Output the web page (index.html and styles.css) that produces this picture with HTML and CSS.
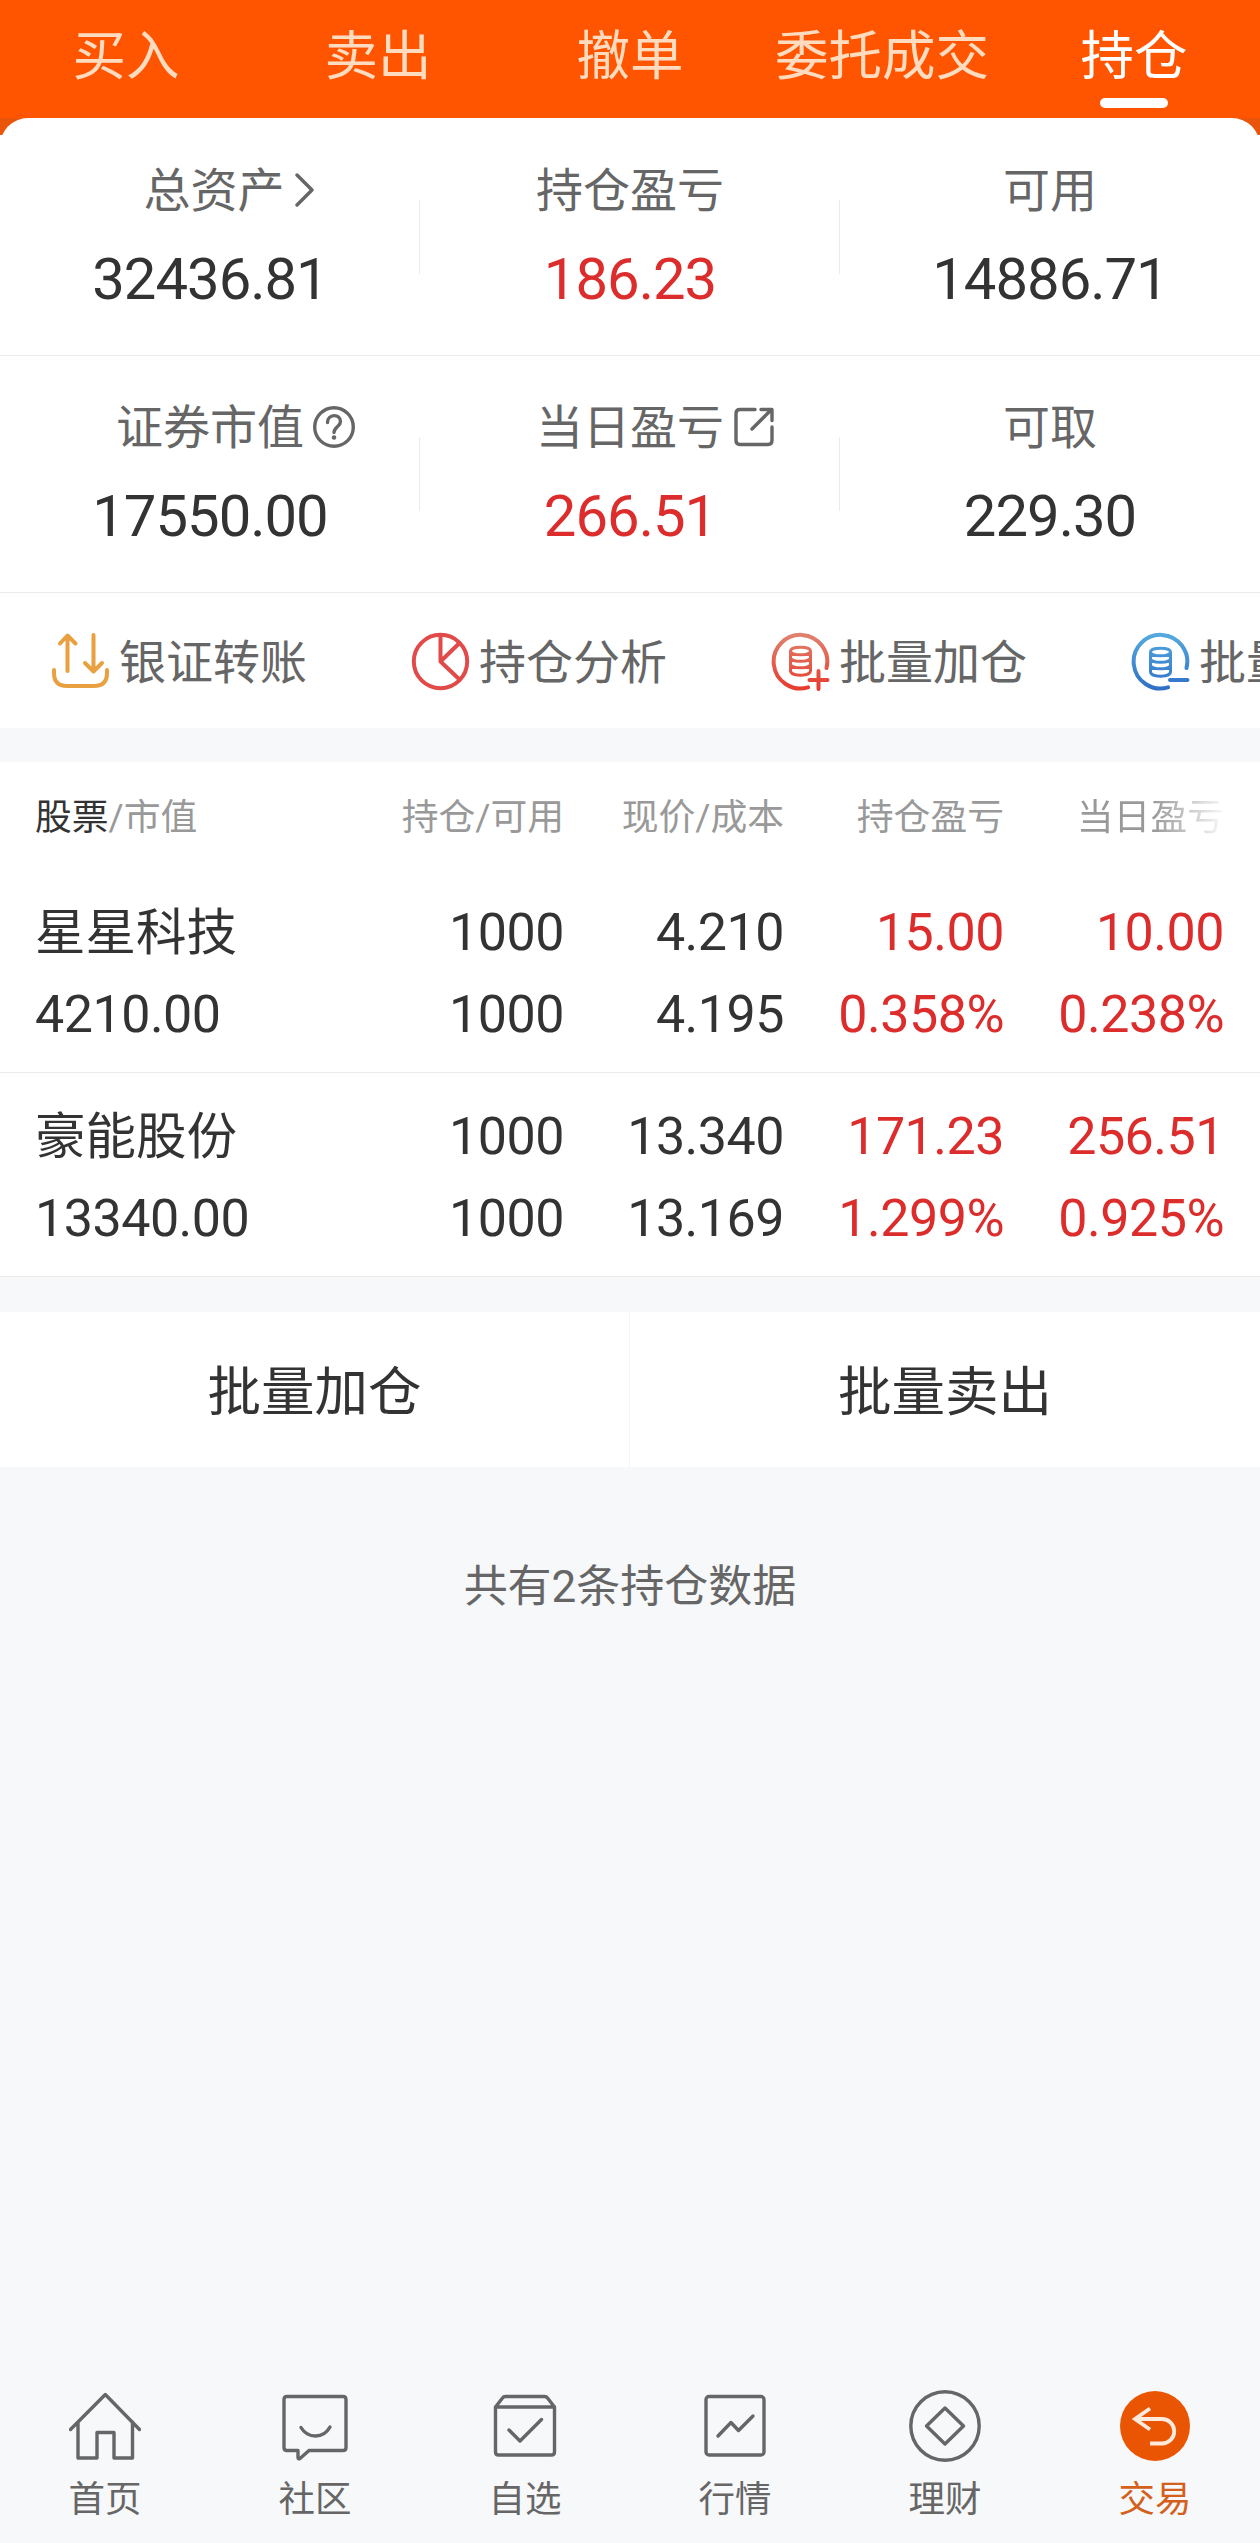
FILE: index.html
```html
<!DOCTYPE html>
<html lang="zh-CN">
<head>
  <meta charset="UTF-8">
  <meta name="viewport" content="width=device-width, initial-scale=1.0">
  <title>持仓</title>
  <link rel="stylesheet" href="styles.css">
</head>
<body>
  <!-- 顶部标签 -->
  <nav class="tabs">
    <a class="tab">买入</a>
    <a class="tab">卖出</a>
    <a class="tab">撤单</a>
    <a class="tab">委托成交</a>
    <a class="tab active">持仓</a>
  </nav>

  <!-- 资产 -->
  <div class="card-wrap">
    <section class="card">
      <div class="asset-row">
        <div class="asset">
          <div class="asset-label asset-label-total">总资产<svg class="chevron" viewBox="0 0 20 34"><path d="M2 2l15 15L2 32"/></svg></div>
          <div class="asset-value">32436.81</div>
        </div>
        <div class="asset">
          <div class="asset-label">持仓盈亏</div>
          <div class="asset-value red">186.23</div>
        </div>
        <div class="asset">
          <div class="asset-label">可用</div>
          <div class="asset-value">14886.71</div>
        </div>
      </div>
      <div class="asset-row">
        <div class="asset">
          <div class="asset-label">证券市值<svg class="label-icon" viewBox="0 0 44 44"><circle cx="22" cy="22" r="19.3"/><path d="M15.5 17.5c0-9 13-9 13-1 0 5-6.500 5.500-6.500 11"/><circle class="dot" cx="22" cy="32.500" r="2.300"/></svg></div>
          <div class="asset-value">17550.00</div>
        </div>
        <div class="asset">
          <div class="asset-label">当日盈亏<svg class="label-icon" viewBox="0 0 44 44"><path d="M23 4.500H8q-4 0-4 4v27q0 4 4 4h28q4 0 4-4V22M20 24L39 5M29 4.500h11v11"/></svg></div>
          <div class="asset-value red">266.51</div>
        </div>
        <div class="asset">
          <div class="asset-label">可取</div>
          <div class="asset-value">229.30</div>
        </div>
      </div>

      <!-- 快捷操作 -->
      <div class="actions">
        <a class="action">
          <svg class="action-icon orange" viewBox="0 0 60 60"><path d="M17.500 40V5M10 12.500L17.500 4.500l8 8M43.500 4v36M35 32l8.500 8.500L52 32M4 39v3q0 13 13 13h27q13 0 13-13v-3"/></svg>
          <span>银证转账</span>
        </a>
        <a class="action">
          <svg class="action-icon pie" viewBox="0 0 60 60"><circle cx="30.5" cy="30.500" r="26.700"/><path d="M30.500 4v26.500L49.500 12M30.500 30.500L49.500 48.500"/></svg>
          <span>持仓分析</span>
        </a>
        <a class="action">
          <svg class="action-icon" viewBox="0 0 60 60">
            <defs><linearGradient id="add" gradientUnits="userSpaceOnUse" x1="0" y1="0" x2="0" y2="60"><stop offset="0" stop-color="#e08671"/><stop offset="1" stop-color="#e63a2c"/></linearGradient></defs>
            <g stroke="url(#add)"><path d="M56.500 37A26.800 26.800 0 1 0 38 56.400"/><path class="thin" d="M20.500 20v20c0 5.500 20 5.500 20 0V20M20.500 20c0-5 20-5 20 0s-20 5-20 0M20.500 26.500c0 5 20 5 20 0M20.500 33c0 5 20 5 20 0"/><path d="M39.500 49h18M48.500 40v18"/></g>
          </svg>
          <span>批量加仓</span>
        </a>
        <a class="action">
          <svg class="action-icon" viewBox="0 0 60 60">
            <defs><linearGradient id="minus" gradientUnits="userSpaceOnUse" x1="0" y1="0" x2="0" y2="60"><stop offset="0" stop-color="#58addf"/><stop offset="1" stop-color="#2e6fc6"/></linearGradient></defs>
            <g stroke="url(#minus)"><path d="M56.500 37A26.800 26.800 0 1 0 38 56.400"/><path class="thin" d="M20.500 21v20c0 5.500 20 5.500 20 0V21M20.500 21c0-5 20-5 20 0s-20 5-20 0M20.500 27.500c0 5 20 5 20 0M20.500 34c0 5 20 5 20 0"/><path d="M40 49l17.500 .01"/></g>
          </svg>
          <span>批量卖出</span>
        </a>
      </div>
    </section>
  </div>

  <!-- 持仓列表 -->
  <section class="holdings">
    <div class="grid grid-head">
      <div><b>股票</b>/市值</div>
      <div>持仓/可用</div>
      <div>现价/成本</div>
      <div>持仓盈亏</div>
      <div class="fade">当日盈亏</div>
    </div>
    <div class="grid grid-row">
      <div><span class="name">星星科技</span><span>4210.00</span></div>
      <div><span>1000</span><span>1000</span></div>
      <div><span>4.210</span><span>4.195</span></div>
      <div class="red"><span>15.00</span><span>0.358%</span></div>
      <div class="red"><span>10.00</span><span>0.238%</span></div>
    </div>
    <div class="grid grid-row">
      <div><span class="name">豪能股份</span><span>13340.00</span></div>
      <div><span>1000</span><span>1000</span></div>
      <div><span>13.340</span><span>13.169</span></div>
      <div class="red"><span>171.23</span><span>1.299%</span></div>
      <div class="red"><span>256.51</span><span>0.925%</span></div>
    </div>
  </section>

  <!-- 批量按钮 -->
  <div class="batch">
    <button class="batch-btn">批量加仓</button>
    <button class="batch-btn">批量卖出</button>
  </div>

  <p class="summary">共有2条持仓数据</p>

  <!-- 底部导航 -->
  <nav class="bottom-nav">
    <a class="nav-item">
      <svg class="nav-icon" viewBox="0 0 72 72"><path d="M1.500 39.500L36.300 4.500 70.500 39.500M9 32v36h19V42.500h17V68h18.500V32"/></svg>
      <span>首页</span>
    </a>
    <a class="nav-item">
      <svg class="nav-icon" viewBox="0 0 72 72"><path d="M8 6.500h56q3 0 3 3v48q0 3-3 3H30l-9 8q-2 1-2-1v-7H8q-3 0-3-3v-48q0-3 3-3z"/><path d="M22 37.500q5 8.500 14.500 8.500T51 37"/></svg>
      <span>社区</span>
    </a>
    <a class="nav-item">
      <svg class="nav-icon" viewBox="0 0 72 72"><path d="M6.500 17h59v45q0 3-3 3h-53q-3 0-3-3zM6.500 17l7-9q1-1.500 3-1.500h39q2 0 3 1.500l7 9M20 40l11 11 21.500-21.500"/></svg>
      <span>自选</span>
    </a>
    <a class="nav-item">
      <svg class="nav-icon" viewBox="0 0 72 72"><rect x="7" y="6.500" width="58" height="58.500" rx="3"/><path d="M19 46l13-13.500 7.500 8L54 26"/></svg>
      <span>行情</span>
    </a>
    <a class="nav-item">
      <svg class="nav-icon" viewBox="0 0 72 72"><circle cx="36" cy="36" r="34.200"/><path d="M36 18l18.500 18L36 54 17.500 36z"/></svg>
      <span>理财</span>
    </a>
    <a class="nav-item active">
      <svg class="nav-icon" viewBox="0 0 72 72"><circle class="disc" cx="36" cy="36" r="35"/><path class="arrow" d="M31 18.500L16 29l15 10.500M16 29h27a12.200 12.200 0 0 1 0 24.500H31"/></svg>
      <span>交易</span>
    </a>
  </nav>
</body>
</html>
```

FILE: styles.css
```css
* {
  box-sizing: border-box;
}

body {
  margin: 0;
  min-height: 2543px;
  display: flex;
  flex-direction: column;
  background: #f7f8fa;
  color: #333;
  font-family: Roboto, "Noto Sans CJK SC", sans-serif;
  overflow-x: hidden;
}

svg {
  fill: none;
  stroke: #666;
  stroke-width: 3.4;
  stroke-linecap: round;
  stroke-linejoin: round;
  flex-shrink: 0;
}

.red {
  color: #dc2c2c;
}

/* tabs */
.tabs {
  display: grid;
  grid-template-columns: repeat(5, 1fr);
  height: 118px;
  background: #ff5500;
}

.tab {
  display: flex;
  flex-direction: column;
  align-items: center;
  padding-top: 17px;
  font-size: 53.5px;
  line-height: 80px;
  color: #ffdcc0;
}

.tab.active {
  color: #fff;
}

.tab.active::after {
  content: "";
  width: 68px;
  height: 10px;
  margin-top: 1px;
  border-radius: 5px;
  background: #fff;
}

/* assets */
.card-wrap {
  background: linear-gradient(#e9560b 17px, #fff 17px);
}

.card {
  background: #fff;
  border-radius: 28px 28px 0 0;
}

.asset-row {
  display: grid;
  grid-template-columns: repeat(3, 1fr);
  height: 237px;
  border-bottom: 1px solid #ebebeb;
  padding-top: 33px;
}

.asset-row:first-child {
  height: 238px;
}

.asset-row + .asset-row {
  padding-top: 32px;
}

.asset {
  display: flex;
  flex-direction: column;
  align-items: center;
  background: linear-gradient(#ebebeb, #ebebeb) no-repeat right 49px / 1px 74px;
}

.asset:last-child {
  background: none;
}

.asset-label {
  display: flex;
  align-items: center;
  height: 70px;
  font-size: 47px;
  color: #666;
}

.asset-label-total {
  padding-left: 8px;
}

.chevron {
  width: 20px;
  height: 34px;
  margin: 8px -30px 0 10px;
}

.label-icon {
  width: 44px;
  height: 44px;
  margin: 8px -52px 0 8px;
}

.label-icon .dot {
  fill: #666;
  stroke: none;
}

.asset-value {
  margin-top: 23px;
  font-size: 58px;
  line-height: 70px;
  letter-spacing: -1px;
}

/* actions */
.actions {
  display: flex;
  height: 135px;
  padding-left: 50px;
  overflow: hidden;
}

.action {
  flex: 0 0 360px;
  display: flex;
  align-items: center;
  gap: 9px;
  font-size: 47px;
  color: #666;
  white-space: nowrap;
}

.action span {
  padding-bottom: 4px;
}

.action-icon {
  width: 60px;
  height: 60px;
  stroke-width: 4;
}

.action-icon .thin {
  stroke-width: 3;
}

.orange {
  stroke: #e8a040;
}

.pie {
  stroke: #e24a4a;
}

/* holdings */
.holdings {
  margin-top: 34px;
  background: #fff;
}

.grid {
  display: grid;
  grid-template-columns: 1fr 200px 220px 220px 220px;
  padding: 0 36px 0 35px;
  text-align: right;
}

.grid > div:first-child {
  text-align: left;
}

.grid-head {
  height: 107px;
  font-size: 36.8px;
  line-height: 111px;
  color: #999;
}

.grid-head b {
  font-weight: 400;
  color: #333;
}

.fade {
  background: linear-gradient(90deg, #999 68%, #fff 102%);
  background-clip: text;
  -webkit-background-clip: text;
  color: transparent;
}

.grid-row {
  height: 204px;
  padding-top: 23px;
  border-bottom: 1px solid #ebebeb;
  font-size: 52px;
  letter-spacing: -0.5px;
}

.grid-row span {
  display: block;
  height: 82px;
  line-height: 82px;
}

.grid-row .name {
  font-size: 50.5px;
  letter-spacing: 0;
}

/* batch buttons */
.batch {
  display: grid;
  grid-template-columns: 1fr 1fr;
  height: 155px;
  margin-top: 35px;
  background: #fff;
}

.batch-btn {
  padding: 0 0 4px;
  border: none;
  background: none;
  font: inherit;
  font-size: 53.5px;
  color: #333;
}

.batch-btn:first-child {
  border-right: 1px solid #f5f5f5;
}

.summary {
  margin: 85px 0 0;
  font-size: 44px;
  line-height: 70px;
  text-align: center;
  color: #666;
}

/* bottom nav */
.bottom-nav {
  display: grid;
  grid-template-columns: repeat(6, 1fr);
  height: 153px;
  margin-top: auto;
}

.nav-item {
  display: flex;
  flex-direction: column;
  align-items: center;
  font-size: 36.5px;
  line-height: 50px;
  color: #666;
}

.nav-icon {
  width: 72px;
  height: 72px;
  margin-bottom: 13px;
}

.nav-item.active {
  color: #d3601c;
}

.disc {
  fill: #ea5504;
  stroke: none;
}

.arrow {
  stroke: #ffeadb;
  stroke-width: 3.8;
  stroke-linecap: butt;
  stroke-linejoin: miter;
}
```
